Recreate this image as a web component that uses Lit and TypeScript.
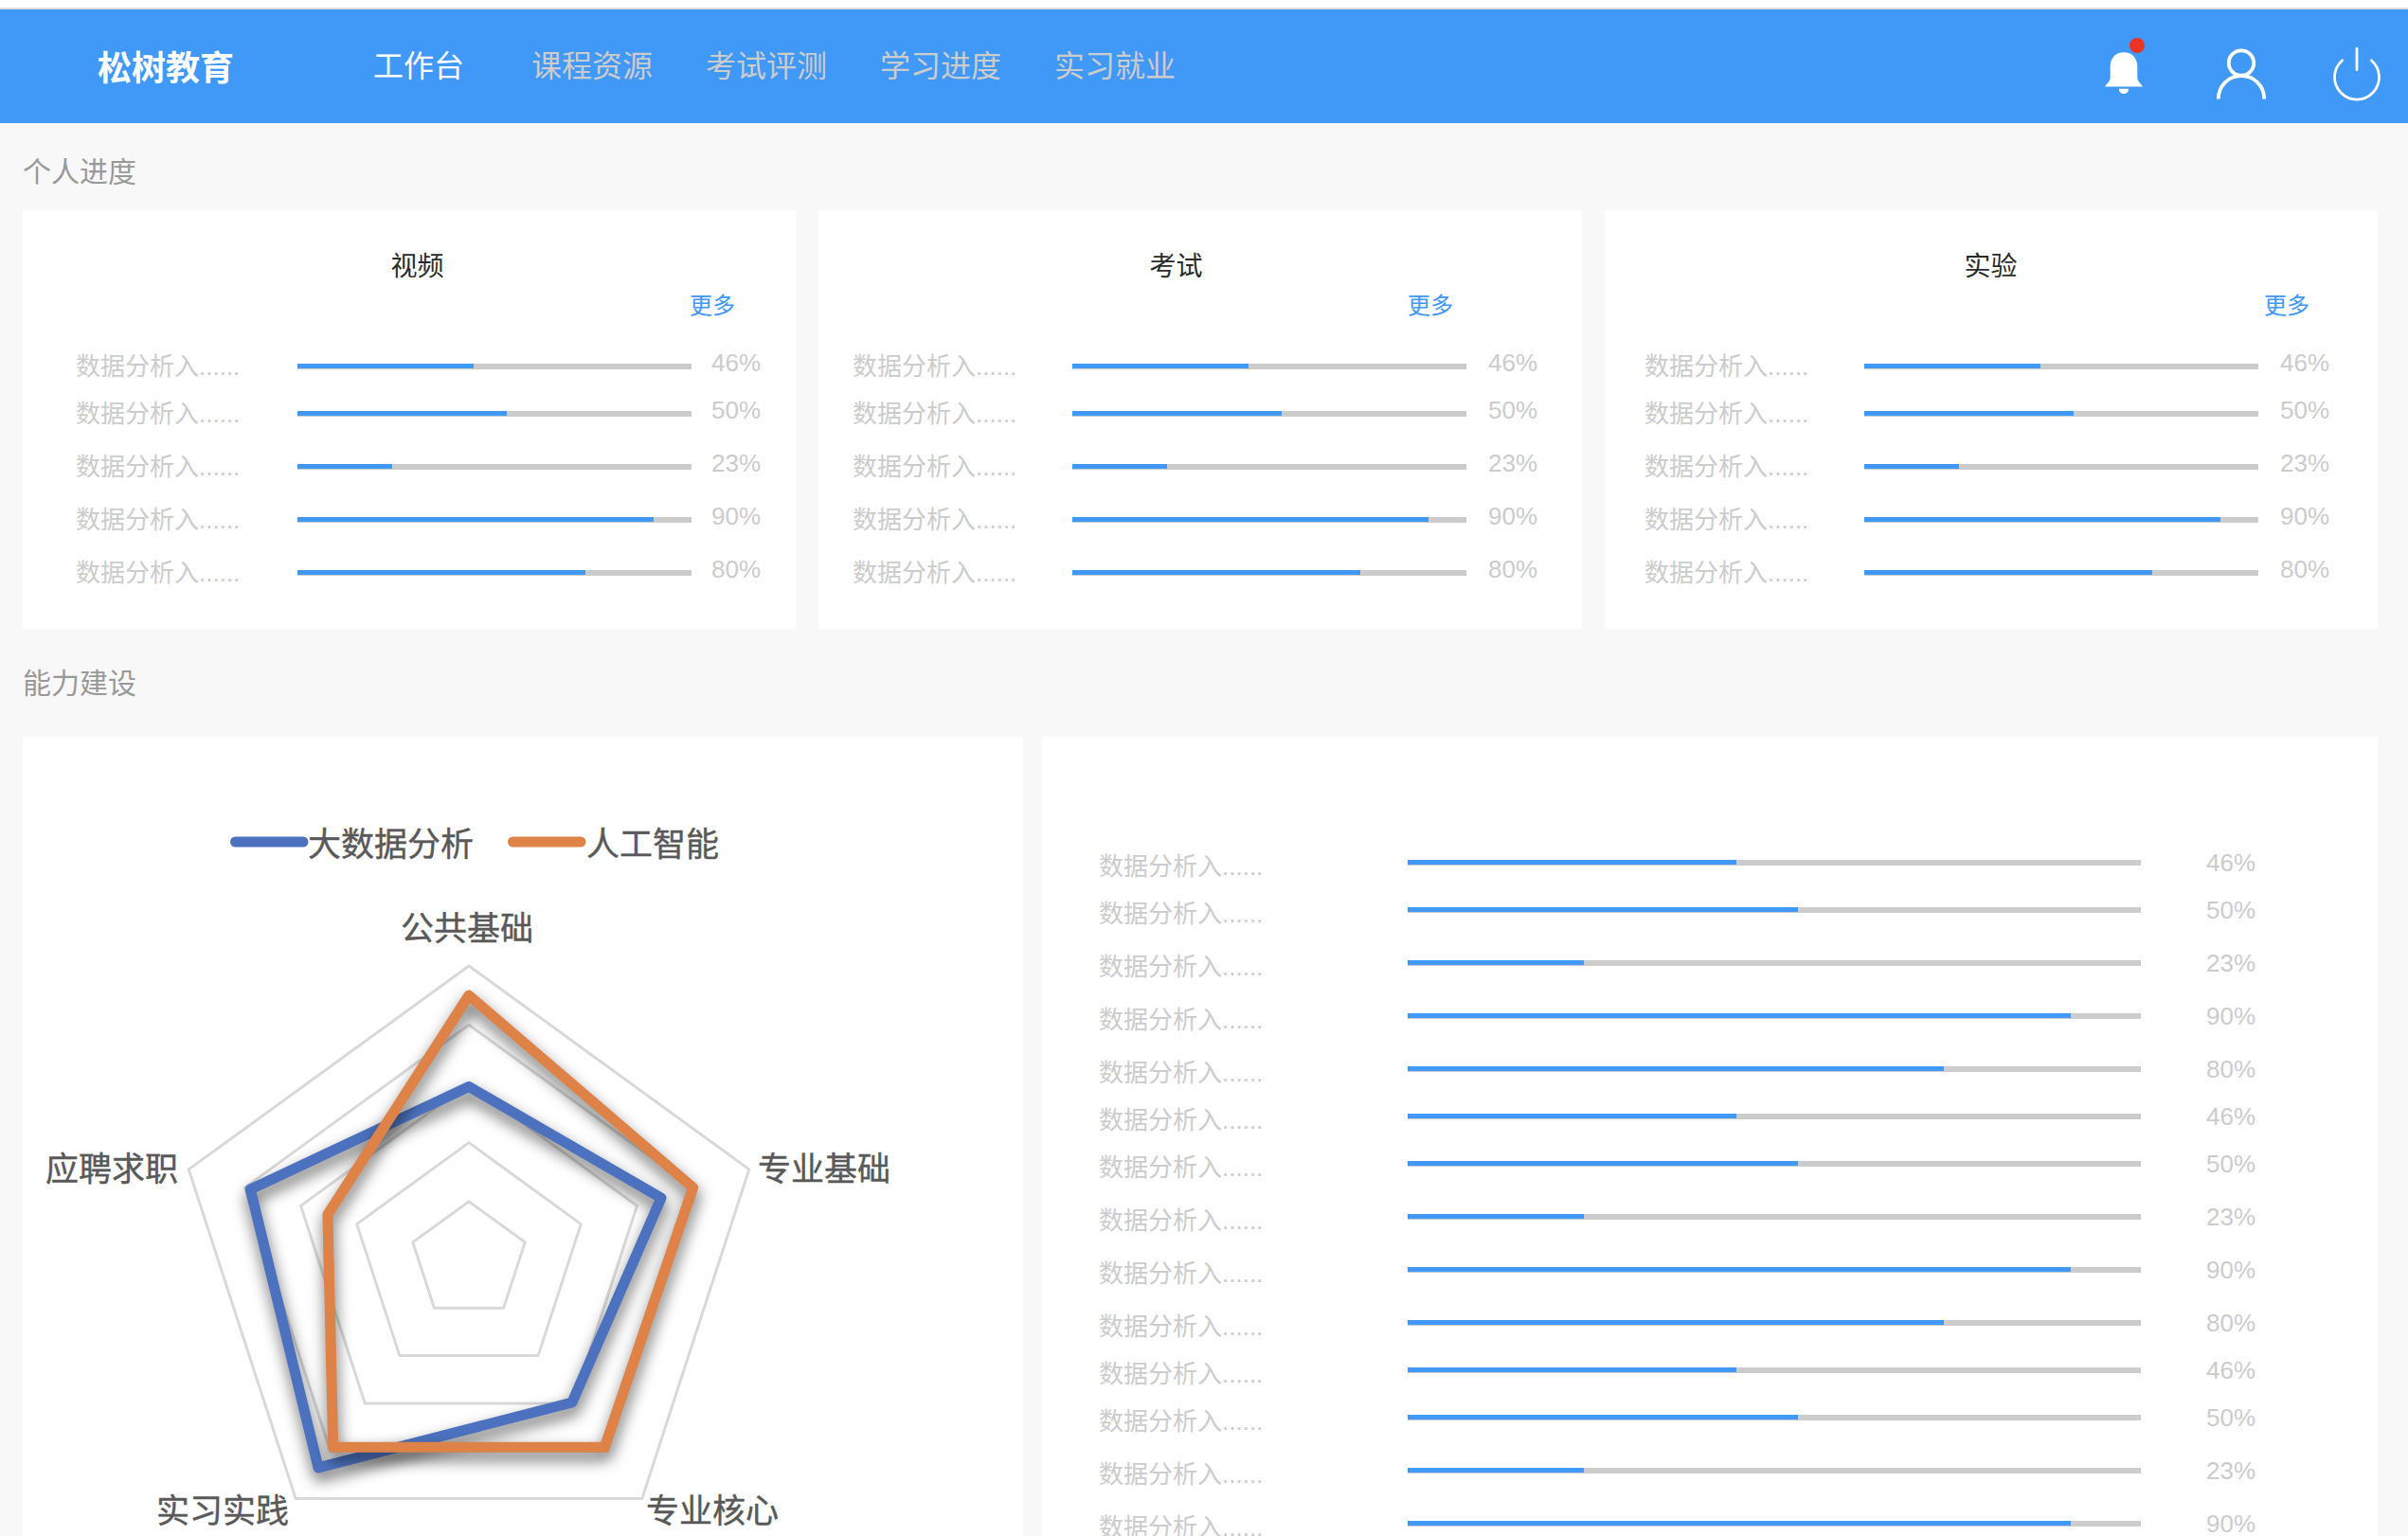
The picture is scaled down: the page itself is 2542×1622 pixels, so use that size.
import { LitElement, html, css, svg } from "lit";
import { customElement, property } from "lit/decorators.js";
import { classMap } from "lit/directives/class-map.js";

interface Course {
  name: string;
  percent: number;
  /** Length of the filled part, in percent of the track. */
  fill: number;
}

const COURSES: Course[] = [
  { name: "数据分析入......", percent: 46, fill: 44.8 },
  { name: "数据分析入......", percent: 50, fill: 53.2 },
  { name: "数据分析入......", percent: 23, fill: 24 },
  { name: "数据分析入......", percent: 90, fill: 90.4 },
  { name: "数据分析入......", percent: 80, fill: 73.1 },
];

const NAV = ["工作台", "课程资源", "考试评测", "学习进度", "实习就业"];

const CARDS = [
  { id: "video", title: "视频" },
  { id: "exam", title: "考试" },
  { id: "lab", title: "实验" },
];

@customElement("progress-list")
export class ProgressList extends LitElement {
  @property({ attribute: false }) items: Course[] = [];
  @property({ type: Boolean }) wide = false;

  static styles = css`
    :host {
      display: block;
    }
    .list {
      list-style: none;
      margin: 0;
      padding: 0;
    }
    .row {
      display: grid;
      grid-template-columns: var(--label-column, 232px) 1fr 52px;
      grid-template-rows: 36px;
      align-items: center;
      margin-bottom: 20px;
      font-size: 26px;
      line-height: 36px;
      color: #ccc;
      white-space: nowrap;
    }
    .row:nth-child(5n + 1),
    .row:nth-child(5n) {
      margin-bottom: 14px;
    }
    .row:last-child {
      margin-bottom: 0;
    }
    .track {
      height: 6px;
      margin-right: var(--track-gap, 23px);
      background: #ccc;
    }
    .fill {
      height: 5px;
      background: #4098f7;
    }
    .wide .track {
      margin-bottom: 8px;
    }
    .percent {
      padding-bottom: 8px;
    }
  `;

  render() {
    return html`
      <ul class=${classMap({ list: true, wide: this.wide })}>
        ${this.items.map(
          (c) => html`
            <li class="row">
              <span>${c.name}</span>
              <div
                class="track"
                role="progressbar"
                aria-label=${c.name}
                aria-valuenow=${c.percent}
                aria-valuemin="0"
                aria-valuemax="100"
              >
                <div class="fill" style="width:${c.fill}%"></div>
              </div>
              <span class="percent">${c.percent}%</span>
            </li>
          `
        )}
      </ul>
    `;
  }
}

const CENTER = { x: 471, y: 553 };
const RADIUS = 311;

/** Points of a five-axis polygon, one share of the full radius for each axis. */
function polygon(shares: number[]): string {
  return shares
    .map((s, i) => {
      const a = (i * 2 * Math.PI) / 5;
      const x = CENTER.x + RADIUS * s * Math.sin(a);
      const y = CENTER.y - RADIUS * s * Math.cos(a);
      return `${x.toFixed(1)},${y.toFixed(1)}`;
    })
    .join(" ");
}

@customElement("skill-radar")
export class SkillRadar extends LitElement {
  static styles = css`
    :host {
      display: block;
    }
    .chart {
      display: block;
      width: 100%;
      height: auto;
    }
    .grid {
      fill: none;
      stroke: #d9d9d9;
      stroke-width: 3;
      stroke-linejoin: round;
    }
    .series {
      fill: none;
      stroke-width: 11;
      stroke-linejoin: round;
      stroke-linecap: round;
    }
    .shaded {
      filter: drop-shadow(1px 8px 8px rgba(0, 0, 0, 0.6));
    }
    .big-data {
      stroke: #4c72bf;
    }
    .ai {
      stroke: #de8248;
    }
    .text {
      font-size: 35px;
      fill: #595959;
      stroke: #595959;
      stroke-width: 0.4;
    }
    .middle {
      text-anchor: middle;
    }
    .end {
      text-anchor: end;
    }
  `;

  render() {
    return html`
      <svg class="chart" viewBox="0 0 1056 860" role="img" aria-label="能力建设">
        <path class="series big-data" d="M224.500 111H296" />
        <text class="text" x="301" y="126">大数据分析</text>
        <path class="series ai" d="M517.500 111H589" />
        <text class="text" x="595" y="126">人工智能</text>
        ${[1, 0.8, 0.6, 0.4, 0.2].map(
          (s) => svg`<polygon class="grid" points=${polygon([s, s, s, s, s])} />`
        )}
        <polygon class="series shaded big-data" points=${polygon([0.59, 0.686, 0.596, 0.87, 0.78])} />
        <polygon class="series shaded ai" points=${polygon([0.9, 0.8, 0.784, 0.784, 0.504])} />
        <text class="text middle" x="469" y="215">公共基础</text>
        <text class="text" x="776" y="469">专业基础</text>
        <text class="text" x="658" y="830">专业核心</text>
        <text class="text end" x="281" y="830">实习实践</text>
        <text class="text end" x="164" y="469">应聘求职</text>
      </svg>
    `;
  }
}

@customElement("app-root")
export class AppRoot extends LitElement {
  static styles = css`
    :host {
      display: block;
      box-sizing: border-box;
      height: 100vh;
      overflow: hidden auto;
      scrollbar-width: none;
      padding-top: 8px;
      background: linear-gradient(#fff 8px, #f8f8f8 8px);
      font-family: "Liberation Sans", "Noto Sans CJK SC", sans-serif;
    }
    .header {
      display: flex;
      align-items: center;
      height: 120px;
      padding: 0 26px 0 103px;
      border-top: 2px solid #dcdcdc;
      background: #4098f7;
      color: #fff;
    }
    .brand {
      margin: 0 147px 0 0;
      padding-top: 6px;
      font-size: 36px;
      line-height: 52px;
      font-weight: 700;
    }
    .nav {
      display: flex;
      gap: 56px;
      flex: 1;
    }
    .link {
      font-size: 32px;
      line-height: 48px;
      color: #ccc;
      text-decoration: none;
    }
    .link.active {
      margin-right: 15px;
      color: #fff;
    }
    .tools {
      display: flex;
      gap: 67px;
    }
    .tool {
      padding: 0;
      border: 0;
      background: none;
      cursor: pointer;
    }
    .icon {
      display: block;
      width: 56px;
      height: 80px;
      fill: none;
      stroke: #fff;
    }
    .main {
      padding: 32px 32px 40px 24px;
    }
    .heading {
      margin: 0 0 20px;
      font-size: 30px;
      line-height: 40px;
      font-weight: 400;
      color: #999;
    }
    .heading.ability {
      margin: 38px 0 36px;
    }
    .cards {
      display: grid;
      grid-template-columns: 816fr 806fr 816fr;
      gap: 24px;
    }
    .panels {
      display: grid;
      grid-template-columns: 1056fr 1410fr;
      gap: 20px;
    }
    .card {
      background: #fff;
    }
    .small {
      display: flex;
      flex-direction: column;
      padding: 40px 51px 41px 42px;
    }
    .title {
      margin: 0 0 3px;
      font-size: 28px;
      line-height: 40px;
      font-weight: 400;
      text-align: center;
      color: #2b2b2b;
    }
    .more {
      align-self: flex-end;
      margin: 0 21px 28px 0;
      font-size: 24px;
      line-height: 36px;
      color: #4098f7;
      text-decoration: none;
    }
    .video {
      --label-column: 234px;
      --track-gap: 21px;
      padding-left: 56px;
      padding-right: 37px;
    }
    .video .title {
      padding-right: 2px;
    }
    .video .more {
      margin-right: 27px;
    }
    .exam {
      padding-left: 36px;
      padding-right: 47px;
    }
    .exam .title {
      padding-right: 40px;
    }
    .exam .more {
      margin-right: 89px;
    }
    .lab .title {
      padding-left: 8px;
    }
    .courses {
      --label-column: 326px;
      --track-gap: 69px;
      padding: 119px 129px 41px 60px;
    }
  `;

  render() {
    return html`
      <header class="header">
        <h1 class="brand">松树教育</h1>
        <nav class="nav">
          ${NAV.map(
            (label, i) =>
              html`<a class=${classMap({ link: true, active: i === 0 })} href="#">${label}</a>`
          )}
        </nav>
        <div class="tools">
          <button class="tool" type="button" aria-label="消息">
            <svg class="icon" viewBox="0 0 56 80">
              <path
                fill="#fff"
                stroke="none"
                d="M8 61.500C10 58.500 13.700 55.500 13.700 52V40C13.700 31 19.500 25.200 28 25.200S42.300 31 42.300 40V52C42.300 55.500 46 58.500 48 61.500ZM23 63.700H33C33 67 31 69 28 69S23 67 23 63.700Z"
              />
              <circle cx="42" cy="18" r="8" fill="#ea3323" stroke="none" />
            </svg>
          </button>
          <button class="tool" type="button" aria-label="个人中心">
            <svg class="icon" viewBox="0 0 56 80" stroke-width="3.800">
              <circle cx="29" cy="36.500" r="13.200" />
              <path d="M4.800 74.500C4.800 60.500 15.500 50.200 29 50.200S53.200 60.500 53.200 74.500" />
            </svg>
          </button>
          <button class="tool" type="button" aria-label="退出">
            <svg class="icon" viewBox="0 0 56 80" stroke-width="2.800" stroke-linecap="round">
              <path d="M12.700 33.800A23.500 23.500 0 1 0 43.300 33.800M28 21.200V43.800" />
            </svg>
          </button>
        </div>
      </header>
      <main class="main">
        <h2 class="heading">个人进度</h2>
        <section class="cards">
          ${CARDS.map(
            (card) => html`
              <article class="card small ${card.id}">
                <h3 class="title">${card.title}</h3>
                <a class="more" href="#">更多</a>
                <progress-list .items=${COURSES}></progress-list>
              </article>
            `
          )}
        </section>
        <h2 class="heading ability">能力建设</h2>
        <section class="panels">
          <div class="card"><skill-radar></skill-radar></div>
          <div class="card courses">
            <progress-list wide .items=${[...COURSES, ...COURSES, ...COURSES]}></progress-list>
          </div>
        </section>
      </main>
    `;
  }
}
